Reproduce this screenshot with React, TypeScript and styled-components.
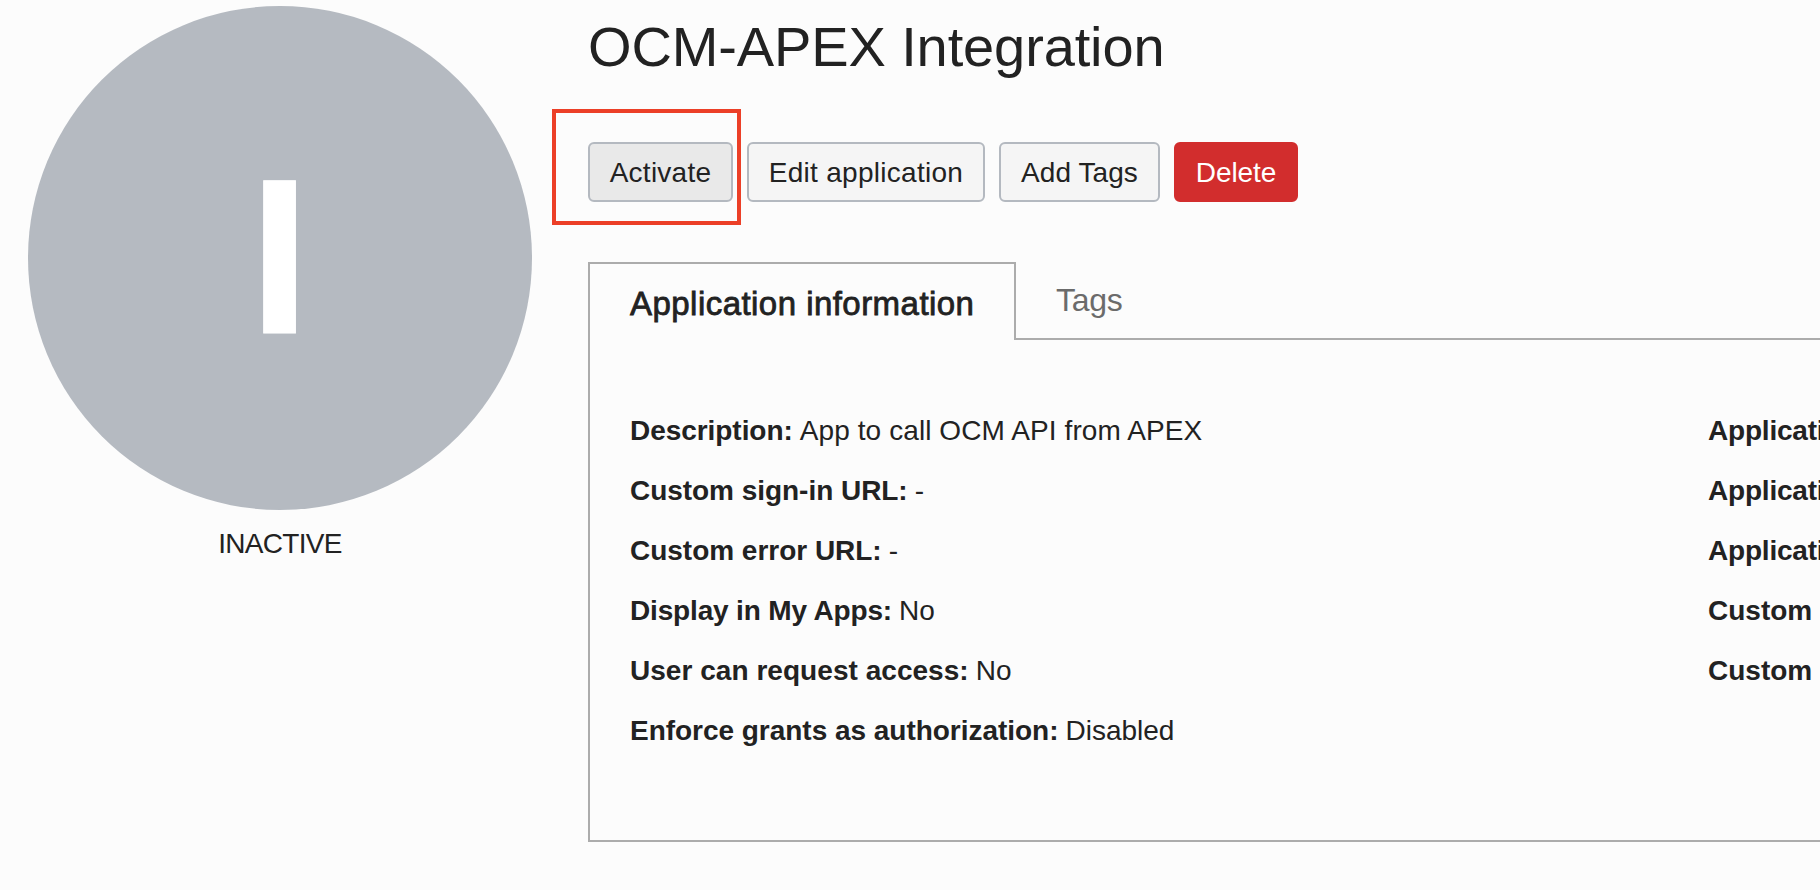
import React from 'react';
import styled, { createGlobalStyle } from 'styled-components';

const GlobalStyle = createGlobalStyle`
  *, *::before, *::after { box-sizing: border-box; }
  body {
    margin: 0;
    background: #fcfcfc;
    color: #222222;
    font-family: "Liberation Sans", Arial, sans-serif;
    font-size: 28px;
    overflow: hidden;
  }
`;

const Page = styled.div`
  display: flex;
  width: 100%;
  height: 890px;
  overflow: hidden;
`;

const Sidebar = styled.aside`
  flex: none;
  width: 588px;
  padding: 6px 56px 0 28px;
  display: flex;
  flex-direction: column;
  align-items: center;
`;

const Avatar = styled.div`
  width: 504px;
  height: 504px;
  border-radius: 50%;
  background: #b5bac1;
  color: #ffffff;
  display: flex;
  align-items: center;
  justify-content: center;
  font-size: 220px;
  font-weight: 700;
  line-height: 504px;
  padding-bottom: 2px;
  padding-right: 1px;
  -webkit-text-stroke: 1px #ffffff;
`;

const Status = styled.div`
  margin-top: 18px;
  line-height: 32px;
  letter-spacing: -0.68px;
`;

const Main = styled.main`
  flex: 1;
  min-width: 0;
  display: flex;
  flex-direction: column;
`;

const Title = styled.h1`
  margin: 0;
  padding-top: 15px;
  font-size: 56px;
  font-weight: 400;
  line-height: 64px;
  letter-spacing: -0.12px;
  white-space: nowrap;
`;

const Actions = styled.div`
  display: flex;
  gap: 14px;
  margin-top: 63px;
`;

const ActionSlot = styled.div`
  position: relative;
  display: flex;
`;

const Highlight = styled.span`
  position: absolute;
  inset: -33px -8px -23px -36px;
  border: 4px solid #ec3f27;
  pointer-events: none;
`;

const Button = styled.button<{ $width: number; $tone?: 'pressed' | 'danger'; $spacing?: number }>`
  width: ${(p) => p.$width}px;
  height: 60px;
  padding: 1px 0 0;
  border: 2px solid ${(p) => (p.$tone === 'danger' ? '#d22d2d' : '#b4b9c0')};
  border-radius: 6px;
  background: ${(p) =>
    p.$tone === 'danger' ? '#d22d2d' : p.$tone === 'pressed' ? '#e9e9e9' : '#f5f5f5'};
  color: ${(p) => (p.$tone === 'danger' ? '#ffffff' : '#222222')};
  font: inherit;
  line-height: 55px;
  letter-spacing: ${(p) => p.$spacing ?? 0}px;
  white-space: nowrap;
`;

const TabBar = styled.div`
  display: flex;
  height: 78px;
  margin-top: 60px;
`;

const ActiveTab = styled.div`
  width: 428px;
  padding-left: 40px;
  border: 2px solid #acacac;
  border-bottom: 0;
  font-size: 33px;
  line-height: 79px;
  letter-spacing: 0.46px;
  white-space: nowrap;
  -webkit-text-stroke: 0.8px #222222;
`;

const Tab = styled.div`
  flex: 1;
  padding-left: 40px;
  border-bottom: 2px solid #acacac;
  color: #6b6b6b;
  font-size: 32px;
  line-height: 77px;
  letter-spacing: -0.3px;
`;

const Panel = styled.section`
  display: flex;
  height: 502px;
  padding: 61px 0 0 40px;
  border-left: 2px solid #acacac;
  border-bottom: 2px solid #acacac;
  overflow: hidden;
`;

const Column = styled.dl<{ $wide?: boolean }>`
  flex: none;
  width: ${(p) => (p.$wide ? '1078px' : 'auto')};
  margin: 0;
`;

const Row = styled.div`
  display: flex;
  gap: 7px;
  height: 60px;
  line-height: 60px;
  white-space: nowrap;
`;

const Label = styled.dt<{ $spacing?: number }>`
  font-weight: 700;
  letter-spacing: ${(p) => p.$spacing ?? 0}px;
`;

const Value = styled.dd<{ $spacing?: number }>`
  margin: 0;
  letter-spacing: ${(p) => p.$spacing ?? 0}px;
`;

const details = [
  { label: 'Description:', value: 'App to call OCM API from APEX', spacing: -0.05, valueSpacing: 0.09 },
  { label: 'Custom sign-in URL:', value: '-', spacing: -0.04 },
  { label: 'Custom error URL:', value: '-', spacing: -0.02 },
  { label: 'Display in My Apps:', value: 'No', spacing: -0.16 },
  { label: 'User can request access:', value: 'No', spacing: 0.04 },
  { label: 'Enforce grants as authorization:', value: 'Disabled', spacing: -0.03 },
];

const moreDetails = [
  { label: 'Application', spacing: -0.2 },
  { label: 'Application', spacing: -0.2 },
  { label: 'Application', spacing: -0.2 },
  { label: 'Custom' },
  { label: 'Custom' },
];

export default function App() {
  return (
    <Page>
      <GlobalStyle />
      <Sidebar>
        <Avatar>I</Avatar>
        <Status>INACTIVE</Status>
      </Sidebar>
      <Main>
        <Title>OCM-APEX Integration</Title>
        <Actions>
          <ActionSlot>
            <Button $width={145} $tone="pressed" $spacing={0.25}>Activate</Button>
            <Highlight />
          </ActionSlot>
          <Button $width={238} $spacing={0.28}>Edit application</Button>
          <Button $width={161} $spacing={0.08}>Add Tags</Button>
          <Button $width={124} $tone="danger" $spacing={-0.1}>Delete</Button>
        </Actions>
        <TabBar>
          <ActiveTab>Application information</ActiveTab>
          <Tab>Tags</Tab>
        </TabBar>
        <Panel>
          <Column $wide>
            {details.map((d) => (
              <Row key={d.label}>
                <Label $spacing={d.spacing}>{d.label}</Label>
                <Value $spacing={d.valueSpacing}>{d.value}</Value>
              </Row>
            ))}
          </Column>
          <Column>
            {moreDetails.map((d, i) => (
              <Row key={i}>
                <Label $spacing={d.spacing}>{d.label}</Label>
              </Row>
            ))}
          </Column>
        </Panel>
      </Main>
    </Page>
  );
}
